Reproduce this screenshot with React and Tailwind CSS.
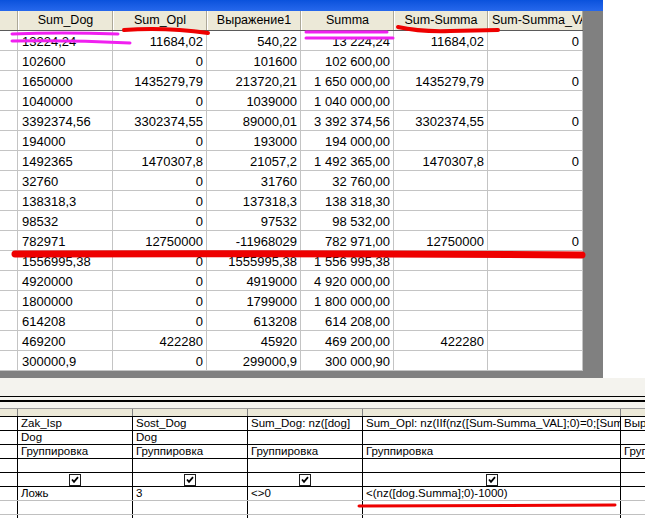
import React from "react";

const rows = [
  ["13224,24", "11684,02", "540,22", "13 224,24", "11684,02", "0"],
  ["102600", "0", "101600", "102 600,00", "", ""],
  ["1650000", "1435279,79", "213720,21", "1 650 000,00", "1435279,79", "0"],
  ["1040000", "0", "1039000", "1 040 000,00", "", ""],
  ["3392374,56", "3302374,55", "89000,01", "3 392 374,56", "3302374,55", "0"],
  ["194000", "0", "193000", "194 000,00", "", ""],
  ["1492365", "1470307,8", "21057,2", "1 492 365,00", "1470307,8", "0"],
  ["32760", "0", "31760", "32 760,00", "", ""],
  ["138318,3", "0", "137318,3", "138 318,30", "", ""],
  ["98532", "0", "97532", "98 532,00", "", ""],
  ["782971", "12750000", "-11968029", "782 971,00", "12750000", "0"],
  ["1556995,38", "0", "1555995,38", "1 556 995,38", "", ""],
  ["4920000", "0", "4919000", "4 920 000,00", "", ""],
  ["1800000", "0", "1799000", "1 800 000,00", "", ""],
  ["614208", "0", "613208", "614 208,00", "", ""],
  ["469200", "422280", "45920", "469 200,00", "422280", ""],
  ["300000,9", "0", "299000,9", "300 000,90", "", ""],
];

const widths = ["w-[95px]", "w-[94px]", "w-[94px]", "w-[93px]", "w-[94px]", "w-[95px]"];
const headers = ["Sum_Dog", "Sum_Opl", "Выражение1", "Summa", "Sum-Summa", "Sum-Summa_VAL"];

const bWidths = ["w-[115px]", "w-[115px]", "w-[115px]", "w-[258px]", "w-[115px]"];

const bRows = [
  ["Zak_Isp", "Sost_Dog", "Sum_Dog: nz([dog]", "Sum_Opl: nz(IIf(nz([Sum-Summa_VAL];0)=0;[Sum-Summa_VAL]", "Выражение1"],
  ["Dog", "Dog", "", "", ""],
  ["Группировка", "Группировка", "Группировка", "Группировка", "Группировка"],
  ["", "", "", "", ""],
  ["#chk", "#chk", "#chk", "#chk", "#chk"],
  ["Ложь", "3", "<>0", "<(nz([dog.Summa];0)-1000)", ""],
  ["", "", "", "", ""],
  ["", "", "", "", ""],
];

function Check() {
  return (
    <svg width="12" height="12" viewBox="0 0 12 12">
      <rect x="0.5" y="0.5" width="11" height="11" fill="#fff" stroke="#1c1c1c" />
      <path d="M3 5.5 L5 7.8 L9 3.2" fill="none" stroke="#000" strokeWidth="1.8" />
    </svg>
  );
}

export default function App() {
  return (
    <div className="relative w-[645px] h-[518px] bg-white overflow-hidden font-['Liberation_Sans',Arial,sans-serif] text-black">
      {/* Datasheet */}
      <div className="w-[603px] bg-[#808080] pb-[7px]">
        <div className="h-[11px] bg-gradient-to-b from-[#0a52dc] to-[#2668ec]" />
        <div className="w-[583px] bg-white">
          <div className="flex h-[20px] bg-[#ece9d8] border-b border-[#5a5a5a] text-[12.5px]">
            <div className="w-[18px] shrink-0 border-r border-[#aca899]" />
            {headers.map((h, i) => (
              <div
                key={i}
                className={`${widths[i]} shrink-0 border-r border-[#aca899] border-l border-l-white flex items-center overflow-hidden whitespace-nowrap ${i === 5 ? "justify-start pl-[3px]" : "justify-center"}`}
              >
                {h}
              </div>
            ))}
          </div>
          {rows.map((r, ri) => (
            <div key={ri} className="flex h-[20px] border-b border-[#c4c4c4] text-[13px] leading-none">
              <div className="w-[18px] shrink-0 border-r border-[#c4c4c4]" />
              {r.map((v, ci) => (
                <div
                  key={ci}
                  className={`${widths[ci]} shrink-0 border-r border-[#c4c4c4] flex items-center pt-[2px] whitespace-nowrap overflow-hidden ${ci === 0 ? "justify-start pl-[4px]" : "justify-end pr-[3px]"}`}
                >
                  {v}
                </div>
              ))}
            </div>
          ))}
        </div>
      </div>

      {/* Query design panel */}
      <div className="bg-[#f4f3ee] h-[18px]" />
      <div className="bg-[#f4f3ee] h-[12px] border-t border-black">
        <div className="mt-[3px] border-t-2 border-black" />
      </div>
      <div className="h-[1px] bg-[#9a9a9a]" />
      <div className="flex h-[8px] bg-[#ece9d8] border-b border-black">
        <div className="w-[18px] shrink-0 border-r border-[#808080]" />
        {bWidths.map((w, i) => (
          <div key={i} className={`${w} shrink-0 border-r border-[#808080]`} />
        ))}
      </div>
      <div className="text-[11.5px] leading-none">
        {bRows.map((r, ri) => (
          <div
            key={ri}
            className={`flex h-[14px] border-b ${ri >= 5 ? "border-[#c0c0c0]" : "border-black"}`}
          >
            <div className="w-[18px] shrink-0 border-r border-black" />
            {r.map((v, ci) => (
              <div
                key={ci}
                className={`${bWidths[ci]} shrink-0 border-r border-black flex items-center pt-[1px] whitespace-nowrap overflow-hidden ${v === "#chk" ? "justify-center" : "justify-start pl-[3px]"}`}
              >
                {v === "#chk" ? <Check /> : v}
              </div>
            ))}
          </div>
        ))}
      </div>

      {/* Annotations */}
      <svg
        className="absolute left-0 top-0 pointer-events-none"
        width="645"
        height="518"
        viewBox="0 0 645 518"
      >
        <g fill="none" strokeLinecap="round">
          <path d="M12 34 Q60 32 118 34" stroke="#f020f0" strokeWidth="3" />
          <path d="M12 41 Q70 40 130 43" stroke="#f020f0" strokeWidth="3" />
          <path d="M306 32 L387 32" stroke="#f020f0" strokeWidth="3" />
          <path d="M306 38 L393 38" stroke="#f020f0" strokeWidth="3" />
          <path d="M124 30 Q165 27 208 33" stroke="#ee0000" strokeWidth="4" />
          <path d="M398 27 Q420 32 450 31 L498 30" stroke="#ee0000" strokeWidth="4" />
          <path d="M15 254 Q300 253 582 255" stroke="#ee0000" strokeWidth="7" />
          <path d="M359 506 L615 505" stroke="#ee0000" strokeWidth="3" />
        </g>
      </svg>
    </div>
  );
}
